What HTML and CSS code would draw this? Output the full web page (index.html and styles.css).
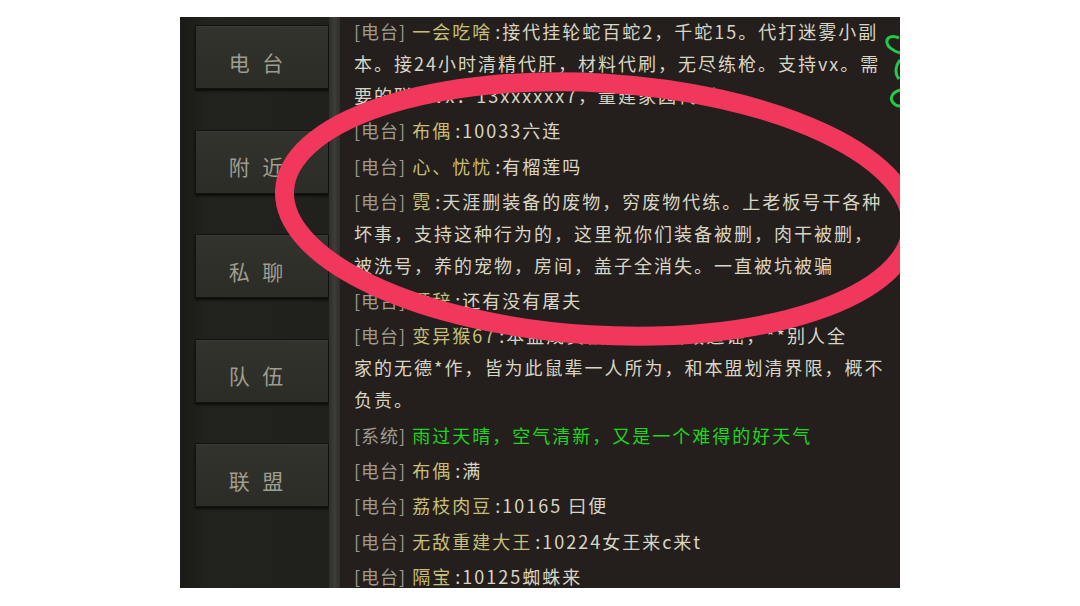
FILE: index.html
```html
<!DOCTYPE html>
<html lang="zh-CN">
<head>
  <meta charset="UTF-8">
  <meta name="viewport" content="width=device-width, initial-scale=1.0">
  <title>聊天频道</title>
  <link rel="stylesheet" href="styles.css">
</head>
<body>
    <div class="screen">
        <aside class="sidebar">
            <div class="tab">电 台</div>
            <div class="tab">附 近</div>
            <div class="tab">私 聊</div>
            <div class="tab">队 伍</div>
            <div class="tab">联 盟</div>
        </aside>
        <div class="divider"></div>

        <div class="chat">
            <div class="chat-list">
                <p class="msg"><span class="chan">[电台]</span><span class="name">一会吃啥</span><span class="colon">:</span>接代挂轮蛇百蛇2，千蛇15。代打迷雾小副<br>本。接24小时清精代肝，材料代刷，无尽练枪。支持vx。需<br>要的联系vx：13xxxxxx7，量建家园代刷。</p>
                <p class="msg"><span class="chan">[电台]</span><span class="name">布偶</span><span class="colon">:</span>10033六连</p>
                <p class="msg"><span class="chan">[电台]</span><span class="name">心、忧忧</span><span class="colon">:</span>有榴莲吗</p>
                <p class="msg"><span class="chan">[电台]</span><span class="name">霓</span><span class="colon">:</span>天涯删装备的废物，穷废物代练。上老板号干各种<br>坏事，支持这种行为的，这里祝你们装备被删，肉干被删，<br>被洗号，养的宠物，房间，盖子全消失。一直被坑被骗</p>
                <p class="msg"><span class="chan">[电台]</span><span class="name">顾辞</span><span class="colon">:</span>还有没有屠夫</p>
                <p class="msg"><span class="chan">[电台]</span><span class="name">变异猴67</span><span class="colon">:</span>本盟成员被冒充，诋毁造谣，**别人全<br>家的无德*作，皆为此鼠辈一人所为，和本盟划清界限，概不<br>负责。</p>
                <p class="msg"><span class="chan">[系统]</span><span class="system">雨过天晴，空气清新，又是一个难得的好天气</span></p>
                <p class="msg"><span class="chan">[电台]</span><span class="name">布偶</span><span class="colon">:</span>满</p>
                <p class="msg"><span class="chan">[电台]</span><span class="name">荔枝肉豆</span><span class="colon">:</span>10165 曰便</p>
                <p class="msg"><span class="chan">[电台]</span><span class="name">无敌重建大王</span><span class="colon">:</span>10224女王来c来t</p>
                <p class="msg"><span class="chan">[电台]</span><span class="name">隔宝</span><span class="colon">:</span>10125蜘蛛来</p>
            </div>
        </div>

        <svg class="marks" viewBox="0 0 720 571" width="720" height="571">
            <ellipse cx="418" cy="192" rx="314" ry="126" transform="rotate(3.5 418 192)" fill="none" stroke="#f1375c" stroke-width="19"/>
            <path d="M719 21 C712 18 706 20 707 26 C708 31 714 34 720 36" fill="none" stroke="#25c948" stroke-width="3"/>
            <path d="M720 43 C716 48 714 56 719 62" fill="none" stroke="#25c948" stroke-width="3"/>
            <path d="M720 73 C713 75 710 80 712 84 C714 88 718 89 720 89" fill="none" stroke="#25c948" stroke-width="3"/>
        </svg>
    </div>
</body>
</html>
```

FILE: styles.css
```css
body {
    margin: 0;
    padding: 0;
    background: #ffffff;
    font-family: "Noto Sans CJK SC", "Noto Sans", sans-serif;
}

.screen {
    position: relative;
    display: flex;
    width: 720px;
    height: 571px;
    margin: 17px 0 0 180px;
    overflow: hidden;
    background: #221f1c;
}

.sidebar {
    width: 134px;
    flex-shrink: 0;
    padding: 8px 0 0 15px;
    display: flex;
    flex-direction: column;
    gap: 40.5px;
    background: linear-gradient(90deg, #1a1a17, #22221e 20%, #20201c);
}

.tab {
    width: 124px;
    height: 53px;
    padding: 9px 8px 0 0;
    display: flex;
    align-items: center;
    justify-content: center;
    font-size: 21px;
    letter-spacing: 4px;
    color: #9e9d8f;
    background: linear-gradient(180deg, #33332d, #2c2c27);
    border: 1px solid #121210;
    box-shadow: 0 2px 2px #0c0c0a, inset 0 1px 0 #3a3a33;
}

.divider {
    width: 11px;
    flex-shrink: 0;
    background: linear-gradient(90deg, #2e2e2a, #3d3c37 50%, #2f2e2a);
}

.chat {
    flex: 1;
    padding: 0 6px 0 14px;
    background: #241f1d;
}

.chat-list {
    margin-top: -2px;
}

.msg {
    margin: 0 0 3.3px;
    font-size: 18px;
    line-height: 32px;
    letter-spacing: 2px;
    white-space: nowrap;
    color: #d9d5c4;
}

.chan {
    color: #9f9b8f;
    letter-spacing: 1px;
    margin-right: 6px;
}

.name {
    color: #c7bf78;
}

.colon {
    margin: 0 0 0 3px;
    color: #d9d5c4;
}

.system {
    color: #1fd61f;
}

.marks {
    position: absolute;
    top: 0;
    left: 0;
    pointer-events: none;
}
```
